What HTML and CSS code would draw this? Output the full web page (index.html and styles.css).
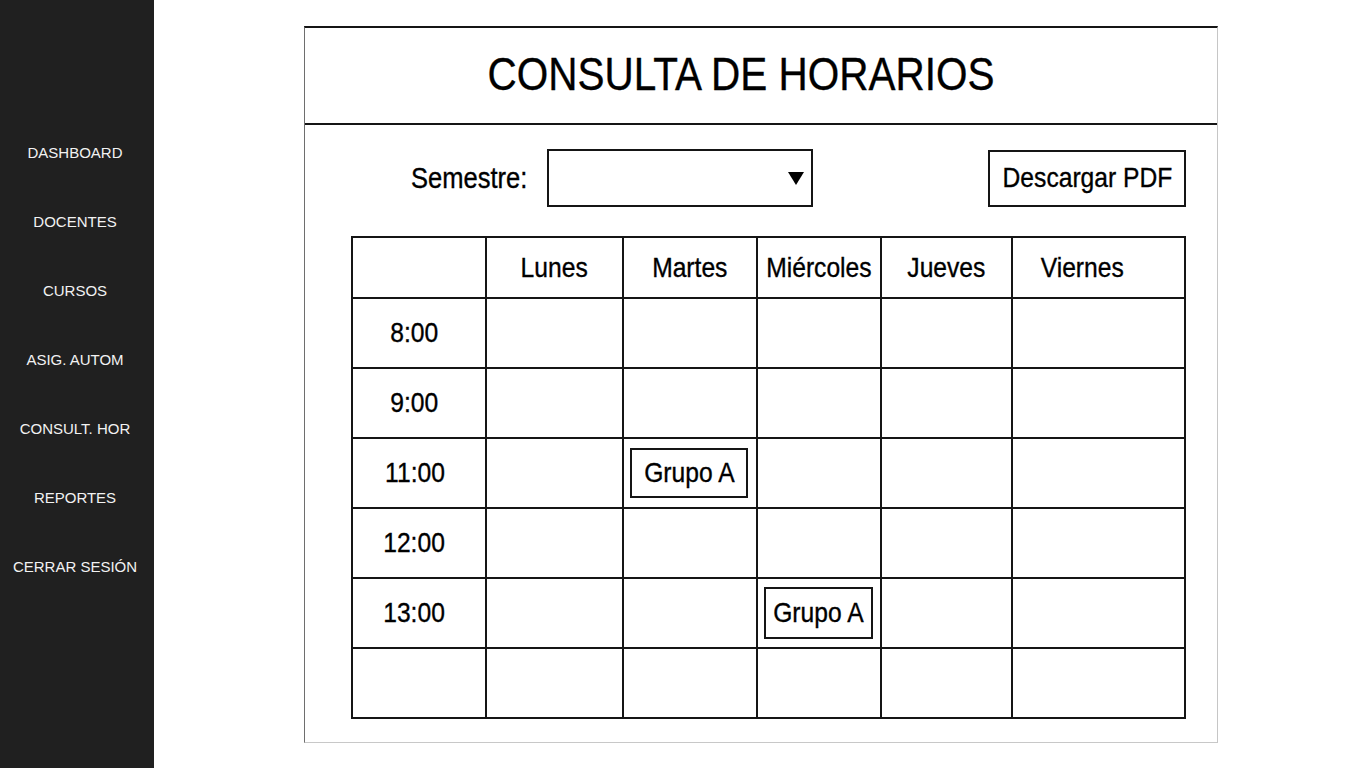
FILE: index.html
```html
<!DOCTYPE html>
<html lang="es">
<head>
<meta charset="utf-8">
<title>Consulta de horarios</title>
<link rel="stylesheet" href="styles.css">
</head>
<body>
<aside class="sidebar">
  <nav class="nav">
    <a class="nav-item" href="#">DASHBOARD</a>
    <a class="nav-item" href="#">DOCENTES</a>
    <a class="nav-item" href="#">CURSOS</a>
    <a class="nav-item" href="#">ASIG. AUTOM</a>
    <a class="nav-item" href="#">CONSULT. HOR</a>
    <a class="nav-item" href="#">REPORTES</a>
    <a class="nav-item" href="#">CERRAR SESIÓN</a>
  </nav>
</aside>
<main class="main">
  <section class="frame">
    <header class="frame-head">
      <h1 class="title"><span class="sq">CONSULTA DE HORARIOS</span></h1>
    </header>
    <div class="toolbar">
      <label class="label"><span class="sq sq-left">Semestre:</span></label>
      <div class="select"><span class="caret"></span></div>
      <button class="btn" type="button"><span class="sq">Descargar PDF</span></button>
    </div>
    <table class="grid">
      <colgroup>
        <col class="c-time"><col class="c-lun"><col class="c-mar"><col class="c-mie"><col class="c-jue"><col class="c-vie">
      </colgroup>
      <thead>
        <tr class="head-row">
          <th></th>
          <th><span class="sq">Lunes</span></th>
          <th><span class="sq">Martes</span></th>
          <th><span class="sq">Miércoles</span></th>
          <th><span class="sq">Jueves</span></th>
          <th class="vie"><span class="sq">Viernes</span></th>
        </tr>
      </thead>
      <tbody>
        <tr class="row"><td class="time"><span class="sq">8:00</span></td><td></td><td></td><td></td><td></td><td></td></tr>
        <tr class="row"><td class="time"><span class="sq">9:00</span></td><td></td><td></td><td></td><td></td><td></td></tr>
        <tr class="row"><td class="time"><span class="sq">11:00</span></td><td></td><td class="slot"><div class="grupo"><span class="sq">Grupo A</span></div></td><td></td><td></td><td></td></tr>
        <tr class="row"><td class="time"><span class="sq">12:00</span></td><td></td><td></td><td></td><td></td><td></td></tr>
        <tr class="row"><td class="time"><span class="sq">13:00</span></td><td></td><td></td><td class="slot"><div class="grupo grupo-narrow"><span class="sq">Grupo A</span></div></td><td></td><td></td></tr>
        <tr class="row"><td class="time"></td><td></td><td></td><td></td><td></td><td></td></tr>
      </tbody>
    </table>
  </section>
</main>
</body>
</html>
```
FILE: styles.css
```css
* { box-sizing: border-box; }

html, body {
  margin: 0;
  height: 100%;
}

body {
  display: flex;
  background: #ffffff;
  font-family: "Liberation Sans", Arial, sans-serif;
  color: #000;
  overflow: hidden;
}

.sidebar {
  width: 154px;
  flex: 0 0 154px;
  height: 100vh;
  background: #202020;
  padding-top: 118px;
}

.nav {
  display: flex;
  flex-direction: column;
  padding-right: 4px;
}

.nav-item {
  height: 69px;
  display: flex;
  align-items: center;
  justify-content: center;
  color: #f2f2f2;
  text-decoration: none;
  font-size: 15px;
}

.main {
  flex: 1;
  display: flex;
  justify-content: center;
  align-items: flex-start;
  padding-top: 26px;
  padding-left: 2px;
}

.frame {
  width: 914px;
  height: 717px;
  background: #fff;
  border-top: 2px solid #151515;
  border-left: 1px solid #6e6e6e;
  border-right: 1px solid #c6c6c6;
  border-bottom: 1px solid #c8c8c8;
  -webkit-text-stroke: 0.35px #000;
}

.sq {
  display: inline-block;
  transform: scaleX(0.88);
  transform-origin: center center;
  white-space: nowrap;
}

.sq-left { transform-origin: left center; }

.frame-head {
  height: 97px;
  border-bottom: 2px solid #151515;
  display: flex;
  align-items: center;
  justify-content: center;
  padding-bottom: 4px;
  padding-right: 40px;
}

.title {
  margin: 0;
  font-size: 46px;
  font-weight: normal;
  line-height: 1;
  color: #000;
}

.toolbar {
  display: flex;
  align-items: center;
  height: 58px;
  margin-top: 24px;
}

.label {
  margin-left: 106px;
  font-size: 29px;
  line-height: 1;
}

.select {
  margin-left: 4px;
  width: 266px;
  height: 58px;
  border: 2px solid #151515;
  display: flex;
  align-items: center;
  justify-content: flex-end;
  padding-right: 7px;
}

.caret {
  width: 0;
  height: 0;
  border-left: 8px solid transparent;
  border-right: 8px solid transparent;
  border-top: 13px solid #000;
}

.btn {
  margin-left: auto;
  margin-right: 31px;
  width: 198px;
  height: 57px;
  border: 2px solid #151515;
  background: #fff;
  font-family: inherit;
  font-size: 28px;
  color: #000;
  padding: 0;
  line-height: 1;
  -webkit-text-stroke: 0.35px #000;
}

.grid {
  margin-top: 29px;
  margin-left: 46px;
  width: 833px;
  border-collapse: collapse;
  table-layout: fixed;
  border: 2px solid #151515;
}

.c-time { width: 134px; }
.c-lun { width: 137px; }
.c-mar { width: 134px; }
.c-mie { width: 124px; }
.c-jue { width: 131px; }
.c-vie { width: 173px; }

.grid th,
.grid td {
  border: 2px solid #151515;
  padding: 0;
  font-weight: normal;
  font-size: 28px;
  text-align: center;
  vertical-align: middle;
  line-height: 1;
}

.head-row { height: 61px; }
.row { height: 70px; }

.grid th.vie { padding-right: 32px; }

.grid td.time { padding-right: 9px; }

.grid td.slot {
  text-align: left;
  padding-left: 6px;
}

.grupo {
  width: 118px;
  height: 50px;
  border: 2px solid #151515;
  display: flex;
  align-items: center;
  justify-content: center;
  font-size: 28px;
}

.grupo-narrow {
  width: 109px;
  height: 52px;
}
```
